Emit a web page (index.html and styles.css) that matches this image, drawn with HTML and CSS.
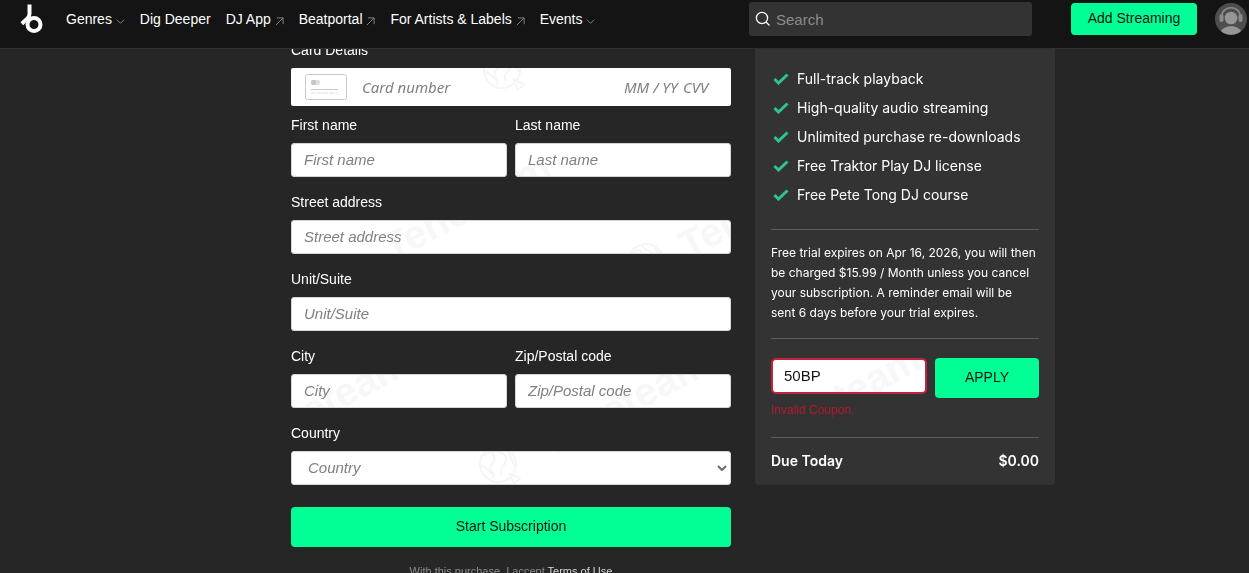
FILE: index.html
```html
<!DOCTYPE html>
<html lang="en">
<head>
  <meta charset="utf-8">
  <meta name="viewport" content="width=device-width, initial-scale=1.0">
  <title>Start Subscription</title>
  <link rel="stylesheet" href="styles.css">
</head>
<body>
  <header class="header">
    <a href="#" class="logo" aria-label="Home">
      <svg width="24" height="30" viewBox="0 0 24 30" fill="none" stroke="#fff" stroke-width="4">
        <circle cx="14" cy="20.500" r="6.500"/>
        <path d="M9.500 0.500v9.200c0 2-.6 3.200-2 4.600L1.800 19.800"/>
      </svg>
    </a>
    <nav class="nav">
      <a href="#">Genres <svg class="chevron" viewBox="0 0 10 10"><path d="M1 3l4 4 4-4"/></svg></a>
      <a href="#">Dig Deeper</a>
      <a href="#">DJ App <svg class="arrow" viewBox="0 0 10 10"><path d="M1 9l8-8M2 1h7v7"/></svg></a>
      <a href="#">Beatportal <svg class="arrow" viewBox="0 0 10 10"><path d="M1 9l8-8M2 1h7v7"/></svg></a>
      <a href="#">For Artists &amp; Labels <svg class="arrow" viewBox="0 0 10 10"><path d="M1 9l8-8M2 1h7v7"/></svg></a>
      <a href="#">Events <svg class="chevron" viewBox="0 0 10 10"><path d="M1 3l4 4 4-4"/></svg></a>
    </nav>
    <div class="search">
      <svg width="16" height="16" viewBox="0 0 16 16" fill="none" stroke="#fff" stroke-width="1.3"><circle cx="7" cy="7" r="5.6"/><path d="M11 11l3.5 3.5"/></svg>
      <input type="search" placeholder="Search" aria-label="Search">
    </div>
    <button type="button" class="btn btn-streaming">Add Streaming</button>
    <a href="#" class="avatar" aria-label="My account">
      <svg width="32" height="32" viewBox="0 0 32 32">
        <circle cx="16" cy="16" r="16" fill="#4d4d4d"/>
        <path d="M7 13C7 2 25 2 25 13" fill="none" stroke="#8c8c8c" stroke-width="1.5"/>
        <rect x="4.5" y="11" width="4" height="8" rx="2" fill="#8c8c8c"/>
        <rect x="23.5" y="11" width="4" height="8" rx="2" fill="#8c8c8c"/>
        <circle cx="16" cy="15" r="6.3" fill="#969696"/>
        <path d="M6 28c3-6.500 17-6.500 20 0-5 5-15 5-20 0z" fill="#969696"/>
      </svg>
    </a>
  </header>

  <main class="checkout">
    <form class="billing">
      <div class="form-group card-group">
        <label for="card">Card Details</label>
        <div class="card-box">
          <svg width="42" height="26" viewBox="0 0 42 26" fill="none" stroke="#c9c9c9">
            <rect x="0.5" y="0.5" width="41" height="25" rx="2"/>
            <rect x="6" y="6" width="9" height="5" rx="2" fill="#dedede" stroke="none"/>
            <rect x="6" y="6" width="5" height="5" rx="2" fill="#c4c4c4" stroke="none"/>
            <path d="M6 15.500h27"/>
            <path d="M6 19h27" stroke-dasharray="5 1" stroke="#dedede"/>
          </svg>
          <input type="text" id="card" class="card-number" placeholder="Card number">
          <input type="text" class="card-date" placeholder="MM / YY" aria-label="Expiry date">
          <input type="text" class="card-cvv" placeholder="CVV" aria-label="CVV">
        </div>
      </div>
      <div class="form-row">
        <div class="form-group">
          <label for="firstName">First name</label>
          <input type="text" id="firstName" placeholder="First name">
        </div>
        <div class="form-group">
          <label for="lastName">Last name</label>
          <input type="text" id="lastName" placeholder="Last name">
        </div>
      </div>
      <div class="form-group">
        <label for="street">Street address</label>
        <input type="text" id="street" placeholder="Street address">
      </div>
      <div class="form-group">
        <label for="unit">Unit/Suite</label>
        <input type="text" id="unit" placeholder="Unit/Suite">
      </div>
      <div class="form-row">
        <div class="form-group">
          <label for="city">City</label>
          <input type="text" id="city" placeholder="City">
        </div>
        <div class="form-group">
          <label for="zip">Zip/Postal code</label>
          <input type="text" id="zip" placeholder="Zip/Postal code">
        </div>
      </div>
      <div class="form-group">
        <label for="country">Country</label>
        <div class="select-box">
          <select id="country"><option>Country</option></select>
          <svg width="10" height="6" viewBox="0 0 10 6" fill="none" stroke="#6b6b6b" stroke-width="2"><path d="M1 1l4 4 4-4"/></svg>
        </div>
      </div>
      <button type="submit" class="btn btn-submit">Start Subscription</button>
      <p class="terms">With this purchase, I accept <a href="#">Terms of Use</a></p>
    </form>

    <aside class="summary">
      <ul class="features">
        <li><svg viewBox="0 0 16 12"><path d="M1.500 6l4 4L14.500 1.500"/></svg>Full-track playback</li>
        <li><svg viewBox="0 0 16 12"><path d="M1.500 6l4 4L14.500 1.500"/></svg>High-quality audio streaming</li>
        <li><svg viewBox="0 0 16 12"><path d="M1.500 6l4 4L14.500 1.500"/></svg>Unlimited purchase re-downloads</li>
        <li><svg viewBox="0 0 16 12"><path d="M1.500 6l4 4L14.500 1.500"/></svg>Free Traktor Play DJ license</li>
        <li><svg viewBox="0 0 16 12"><path d="M1.500 6l4 4L14.500 1.500"/></svg>Free Pete Tong DJ course</li>
      </ul>
      <p class="trial">Free trial expires on Apr 16, 2026, you will then be charged $15.99 / Month unless you cancel your subscription. A reminder email will be sent 6 days before your trial expires.</p>
      <form class="coupon">
        <div class="coupon-field">
          <input type="text" id="coupon" value="50BP" aria-label="Coupon code">
          <p class="error">Invalid Coupon.</p>
        </div>
        <button type="button" class="btn btn-apply">APPLY</button>
      </form>
      <div class="total"><span>Due Today</span><span>$0.00</span></div>
    </aside>

    <svg class="watermark" width="1249" height="573" viewBox="0 0 1249 573" aria-hidden="true">
      <text transform="translate(392 262) rotate(-28)">Teneteam</text>
      <text transform="translate(688 260) rotate(-28)">Teneteam</text>
      <text transform="translate(250 458) rotate(-28)">Teneteam</text>
      <text transform="translate(550 458) rotate(-28)">Teneteam</text>
      <text transform="translate(762 454) rotate(-28)">Teneteam</text>
      <g class="emblem">
        <g id="globe">
          <circle cx="498" cy="464" r="18"/>
          <path d="M484 456c8-10 14 2 8 8s6 10 0 14M494 447c2 8 12 4 12 12s-8 8-4 16M506 450c8 6 4 14 10 16M481 466c6 0 6 6 12 8M510 474l10 4-6 6z"/>
        </g>
        <use href="#globe" x="4" y="-394"/>
        <use href="#globe" x="148" y="-202"/>
      </g>
    </svg>
  </main>
</body>
</html>
```
FILE: styles.css
```css
* {
  box-sizing: border-box;
}
body {
  margin: 0;
  height: 100vh;
  overflow: hidden;
  background-color: #262626;
  color: #ffffff;
  font-family: "Liberation Sans", Arial, sans-serif;
  font-size: 14px;
  line-height: 20px;
}
a {
  color: inherit;
  text-decoration: none;
}
p, ul {
  margin: 0;
  padding: 0;
}
input, select, button {
  font-family: inherit;
  font-size: 15px;
  margin: 0;
}

/* header */
.header {
  position: fixed;
  top: 0;
  left: 0;
  right: 0;
  z-index: 10;
  display: flex;
  align-items: center;
  height: 49px;
  padding: 0 2px 10px 20px;
  background-color: #141414;
  border-bottom: 1px solid #303030;
}
.logo {
  display: flex;
  margin-right: 22px;
}
.nav {
  display: flex;
  flex: 1;
  gap: 15px;
  white-space: nowrap;
}
.nav svg {
  width: 9px;
  height: 9px;
  margin-bottom: -2px;
  fill: none;
  stroke: #8c8c8c;
}
.search {
  display: flex;
  align-items: center;
  gap: 5px;
  width: 283px;
  height: 34px;
  padding: 0 6px;
  margin-right: 39px;
  background-color: #333333;
  border-radius: 3px;
}
.search input {
  flex: 1;
  min-width: 0;
  padding: 0;
  border: none;
  outline: none;
  background: none;
  color: #ffffff;
}
.search input::placeholder {
  color: #8c8c8c;
}
.btn {
  padding: 0 0 2px;
  border: none;
  border-radius: 4px;
  background-color: #01ff95;
  color: #141414;
  font-size: 14px;
  cursor: pointer;
}
.btn-streaming {
  width: 126px;
  height: 32px;
}
.avatar {
  display: flex;
  margin-left: 18px;
}

/* checkout */
.checkout {
  display: grid;
  grid-template-columns: 22fr 15fr;
  align-items: start;
  gap: 24px;
  padding: 40px 194px 0 291px;
}
.form-group {
  display: flex;
  flex-direction: column;
  flex: 1;
  gap: 8px;
  margin-bottom: 15px;
}
.card-group {
  margin-bottom: 9px;
}
.form-row {
  display: flex;
  gap: 8px;
}
.form-group input,
.form-group select,
.coupon input {
  width: 100%;
  height: 34px;
  padding: 0 12px 2px;
  border: 1px solid #d5d5d5;
  border-radius: 3px;
  background-color: #ffffff;
  color: #141414;
}
.form-group input::placeholder {
  color: #808080;
  font-style: italic;
}
.card-box {
  display: flex;
  align-items: center;
  height: 38px;
  padding: 0 14px;
  border-radius: 2px;
  background-color: #ffffff;
}
.form-group .card-box input {
  padding: 0;
  border: none;
  font-family: "Noto Sans", sans-serif;
}
.form-group .card-box .card-number {
  flex: 1;
  margin-left: 15px;
}
.form-group .card-box .card-date {
  width: 59px;
}
.form-group .card-box .card-cvv {
  width: 34px;
}
.select-box {
  display: grid;
  align-items: center;
}
.select-box select,
.select-box svg {
  grid-area: 1 / 1;
}
.form-group .select-box select {
  appearance: none;
  padding: 0 16px 2px;
  color: #808080;
  font-style: italic;
}
.select-box svg {
  justify-self: end;
  margin-right: 4px;
  pointer-events: none;
}
.btn-submit {
  width: 100%;
  height: 40px;
  margin-top: 7px;
}
.terms {
  margin-top: 14px;
  color: #8c8c8c;
  font-size: 11px;
  text-align: center;
}
.terms a {
  color: #d5d5d5;
}

/* summary */
.summary {
  padding: 24px 16px 14px;
  border-radius: 4px;
  background-color: #333333;
}
.features,
.trial,
.total {
  font-family: Inter, "Liberation Sans", sans-serif;
}
.features {
  display: flex;
  flex-direction: column;
  gap: 9px;
  padding: 5px 0 24px;
  list-style: none;
  font-size: 14px;
}
.features li {
  display: flex;
  align-items: center;
  gap: 8px;
}
.features svg {
  width: 16px;
  height: 12px;
  margin-left: 2px;
  fill: none;
  stroke: #2dc58c;
  stroke-width: 3;
}
.trial {
  padding: 13px 0 15px;
  border-top: 1px solid #5e5e5e;
  border-bottom: 1px solid #5e5e5e;
  font-size: 12px;
}
.coupon {
  display: flex;
  align-items: flex-start;
  gap: 8px;
  padding: 19px 0 17px;
}
.coupon-field {
  flex: 1;
}
.coupon input {
  height: 36px;
  padding: 0 11px 2px;
  border: 2px solid #c0243a;
  border-radius: 5px;
}
.error {
  margin-top: 6px;
  color: #b3182f;
  font-size: 12px;
}
.btn-apply {
  width: 104px;
  height: 40px;
}
.total {
  display: flex;
  justify-content: space-between;
  padding-top: 13px;
  border-top: 1px solid #5e5e5e;
  font-size: 14px;
  font-weight: 600;
}

/* faint mark, visible only on the white fields */
.watermark {
  position: absolute;
  top: 0;
  left: 0;
  pointer-events: none;
  mix-blend-mode: darken;
  fill: #f7f7f7;
  font-size: 40px;
  font-weight: bold;
}
.emblem {
  fill: none;
  stroke: #f5f5f5;
  stroke-width: 2;
}
```
